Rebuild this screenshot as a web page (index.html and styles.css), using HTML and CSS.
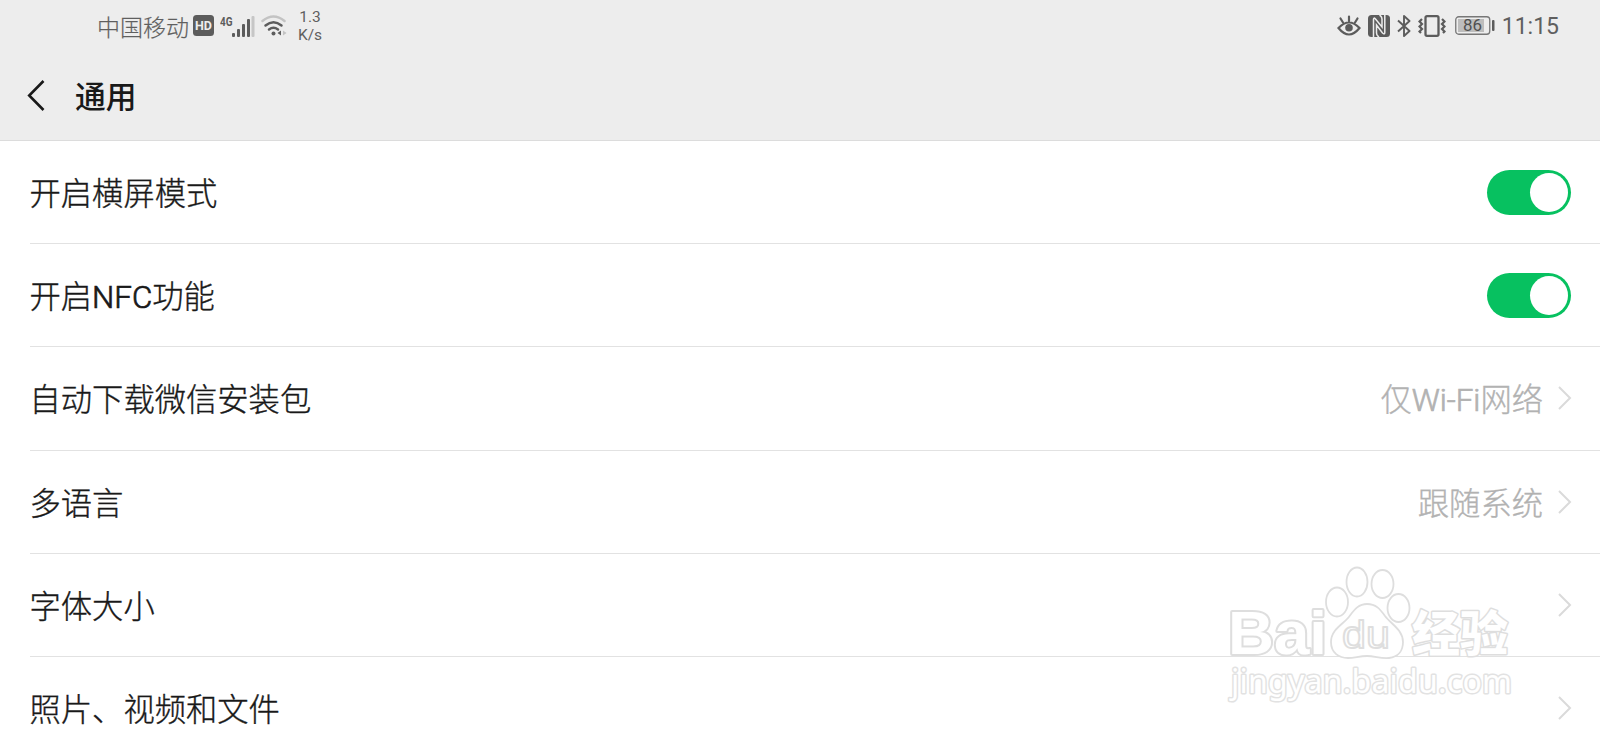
FILE: index.html
```html
<!DOCTYPE html>
<html lang="zh-CN">
<head>
<meta charset="utf-8">
<title>通用</title>
<link rel="stylesheet" href="styles.css">
</head>
<body>
<header class="top">
  <div class="status">
    <div class="status-left">
      <span class="carrier">中国移动</span>
      <svg class="hd" width="21" height="21" viewBox="0 0 21 21"><rect width="21" height="21" rx="3.5" fill="#5c5c5c"/><text x="2" y="15.200" textLength="17" lengthAdjust="spacingAndGlyphs" class="hd-text">HD</text></svg>
      <svg class="signal" width="36" height="24" viewBox="0 0 36 24"><text x="0" y="11.5" textLength="12.5" lengthAdjust="spacingAndGlyphs" class="g-text">4G</text><g fill="#5c5c5c"><rect x="12" y="19" width="3" height="4" rx="1"/><rect x="17" y="15" width="3" height="8" rx="1"/><rect x="22" y="10" width="3" height="13" rx="1"/><rect x="27" y="5" width="3" height="18" rx="1"/><rect x="31.500" y="2" width="3" height="21" rx="1" fill="#c6c6c6"/></g></svg>
      <svg class="wifi" width="26" height="22" viewBox="0 0 26 22" fill="none" stroke-linecap="round"><path d="M1.500 6Q12.500-3 23.500 6" stroke="#c3c3c3" stroke-width="2.500"/><g stroke="#5c5c5c" stroke-width="2.500"><path d="M4.500 10.500Q12.500 4 20.500 10.500M8 14.500Q12.500 11 17 14.500"/></g><circle cx="12.500" cy="18.500" r="2" fill="#5c5c5c"/><path d="M20 15.500V20.500L16.500 18Z" fill="#5c5c5c"/><path d="M22 15.500V20.500L25.500 18Z" fill="#c3c3c3"/></svg>
      <span class="speed"><span>1.3</span><span>K/s</span></span>
    </div>
    <div class="status-right">
      <svg class="eye" width="24" height="22" viewBox="0 0 24 22" fill="none" stroke="#5c5c5c" stroke-width="2.200" stroke-linecap="round"><path d="M1.500 13Q12 2 22.500 13Q12 26 1.500 13ZM12 6V1.500M6 7.500L3.500 3.500M18 7.500L20.500 3.500"/><circle cx="12" cy="12.800" r="3.800" fill="#5c5c5c" stroke="none"/></svg>
      <svg class="nfc" width="22" height="22" viewBox="0 0 22 22"><rect width="22" height="22" rx="3.500" fill="#5c5c5c"/><path d="M5.500 22V4.500Q5.500 2 7.500 4L14 12V4Q14 1.500 11.500 0M16.800 0V17.500Q16.800 20 14.500 18L8.500 10V18Q8.500 20.500 11 22" stroke="#ededed" stroke-width="1.500" fill="none"/></svg>
      <svg class="bt" width="14" height="22" viewBox="0 0 14 22" fill="none" stroke="#5c5c5c" stroke-width="1.900" stroke-linejoin="round"><path d="M1 5.500L12.500 16L7 21V1L12.500 6L1 16.500"/></svg>
      <svg class="vib" width="28" height="22" viewBox="0 0 28 22" fill="none" stroke="#5c5c5c" stroke-width="2.300"><rect x="7.500" y="1.200" width="13" height="19.600" rx="1.500"/><path stroke-width="2.200" d="M4 4L1.500 6.500L4 9L1.500 11.500L4 14L1.500 16.500L3 18M24 4L26.500 6.500L24 9L26.500 11.500L24 14L26.500 16.500L25 18"/></svg>
      <svg class="battery" width="40" height="19" viewBox="0 0 40 19"><rect x=".75" y=".75" width="34" height="17.500" rx="3" fill="none" stroke="#777" stroke-width="1.300"/><rect x="3" y="3" width="26" height="13" fill="#bdbdbd"/><rect x="37" y="4" width="2.500" height="11" rx="1" fill="#5c5c5c"/><text x="8" y="15.200" textLength="19" lengthAdjust="spacingAndGlyphs" class="bat-text">86</text></svg>
      <span class="time">11:15</span>
    </div>
  </div>
  <div class="title-bar">
    <svg class="back" width="18" height="32" viewBox="0 0 18 32"><path d="M16.500 1L2.200 15.500L16.500 30" fill="none" stroke="#191919" stroke-width="2.600"/></svg>
    <h1 class="title">通用</h1>
  </div>
</header>
<main class="list">
  <div class="row"><span class="label">开启横屏模式</span><span class="switch"><span class="knob"></span></span></div>
  <div class="row"><span class="label">开启<span class="latin">NFC</span>功能</span><span class="switch"><span class="knob"></span></span></div>
  <div class="row"><span class="label">自动下载微信安装包</span><span class="value">仅<span class="latin">Wi-Fi</span>网络</span><svg class="chev" width="14" height="26" viewBox="0 0 14 26"><path d="M1 2L12 13L1 24"/></svg></div>
  <div class="row"><span class="label">多语言</span><span class="value">跟随系统</span><svg class="chev" width="14" height="26" viewBox="0 0 14 26"><path d="M1 2L12 13L1 24"/></svg></div>
  <div class="row"><span class="label">字体大小</span><svg class="chev" width="14" height="26" viewBox="0 0 14 26"><path d="M1 2L12 13L1 24"/></svg></div>
  <div class="row"><span class="label">照片、视频和文件</span><svg class="chev" width="14" height="26" viewBox="0 0 14 26"><path d="M1 2L12 13L1 24"/></svg></div>
</main>
<svg class="watermark" width="320" height="160" viewBox="0 0 320 160">
  <g class="wm-shape">
    <text class="wm-bai" x="18" y="104" textLength="99" lengthAdjust="spacingAndGlyphs">Bai</text>
    <ellipse cx="127" cy="52" rx="11" ry="14.500"/><ellipse cx="147" cy="32" rx="10.500" ry="14.500"/><ellipse cx="172.500" cy="34" rx="11" ry="14"/><ellipse cx="188.500" cy="58" rx="11" ry="14"/>
    <path d="M157 54C147 54 143 62 138 68C132 75 121 80 121 92C121 103 129 108 138 108C145 108 149 106 157 106C165 106 171 109 179 108C188 107 193 101 193 92C193 80 181 74 175 66C170 59 166 54 157 54Z"/>
    <text class="wm-du" x="132" y="98" textLength="48" lengthAdjust="spacingAndGlyphs">du</text>
    <text class="wm-cn" x="202" y="101" textLength="96" lengthAdjust="spacingAndGlyphs">经验</text>
    <text class="wm-url" x="21" y="143" textLength="281">jingyan.baidu.com</text>
  </g>
</svg>
</body>
</html>
```
FILE: styles.css
```css
* { box-sizing: border-box; }
body {
  margin: 0;
  width: 1600px;
  height: 738px;
  overflow: hidden;
  position: relative;
  background: #fff;
  color: #191919;
  font-family: Roboto, "Noto Sans CJK SC", sans-serif;
}
.top {
  height: 141px;
  background: #ededed;
  border-bottom: 1px solid #dcdcdc;
}
.status {
  height: 52px;
  padding: 0 41px 0 97px;
  display: flex;
  justify-content: space-between;
  color: #5f5f5f;
}
.status-left, .status-right { display: flex; align-items: center; }
.carrier {
  font: 300 23px/50px "Noto Sans CJK SC", sans-serif;
  width: 92px;
  white-space: nowrap;
  -webkit-text-stroke: .2px #5f5f5f;
  padding-bottom: 1px;
}
.hd { margin-left: 4px; }
.status-left > svg, .status-right > svg { margin-bottom: 1px; }
.hd-text { font: 700 13.500px Roboto, sans-serif; fill: #ededed; }
.signal { margin-left: 6px; }
.g-text { font: 700 12.500px Roboto, sans-serif; fill: #5c5c5c; }
.wifi { margin-left: 5px; }
.speed {
  margin-left: 11px;
  display: flex;
  flex-direction: column;
  align-items: center;
  font: 400 15.500px/18px Roboto, sans-serif;
}
.eye { margin-right: 7px; }
.nfc { margin-right: 7px; }
.bt { margin-right: 7px; }
.vib { margin-right: 9px; }
.battery { margin-right: 7px; }
.bat-text { font: 400 17px Roboto, sans-serif; fill: #505050; }
.time { font: 400 23px/50px Roboto, sans-serif; padding-top: 2px; }
.title-bar {
  height: 88px;
  padding-left: 27px;
  display: flex;
  align-items: center;
}
.title {
  margin: 0 0 2px 30px;
  font: 500 30.800px/44px "Noto Sans CJK SC", sans-serif;
}
.list { padding-left: 29.500px; }
.row {
  height: 103.2px;
  padding-right: 29px;
  display: flex;
  align-items: center;
  border-bottom: 1px solid #e2e2e2;
}
.label, .value {
  padding-top: 6px;
  font-weight: 300;
  font-size: 31.3px;
  line-height: 46px;
  -webkit-text-stroke: .35px currentColor;
}
.label { flex: 1; }
.latin { -webkit-text-stroke-width: .7px; }
.value {
  margin-right: 14px;
  color: #b2b2b2;
}
.switch {
  width: 84px;
  height: 45px;
  padding: 3px;
  border-radius: 23px;
  background: #07c160;
  display: flex;
  justify-content: flex-end;
}
.knob { width: 38px; height: 39px; border-radius: 50%; background: #fff; }
.chev { position: relative; left: 1px; }
.chev path { fill: none; stroke: #dadada; stroke-width: 2; }
.watermark {
  position: absolute;
  left: 1210px;
  top: 550px;
}
.wm-shape { fill: #fff; stroke: #dedede; stroke-width: 1.800; stroke-linejoin: round; }
.wm-shape text { paint-order: stroke; stroke-width: 3; }
.wm-shape .wm-bai { font: 700 62px "Liberation Sans", sans-serif; stroke-width: 4; }
.wm-shape .wm-du { font: 400 39px "Liberation Sans", sans-serif; paint-order: normal; stroke-width: 1.800; }
.wm-shape .wm-cn { font: 900 48px "Noto Sans CJK SC", sans-serif; }
.wm-shape .wm-url { font: 400 32px "Noto Sans", sans-serif; stroke: #e2e2e2; }
```
